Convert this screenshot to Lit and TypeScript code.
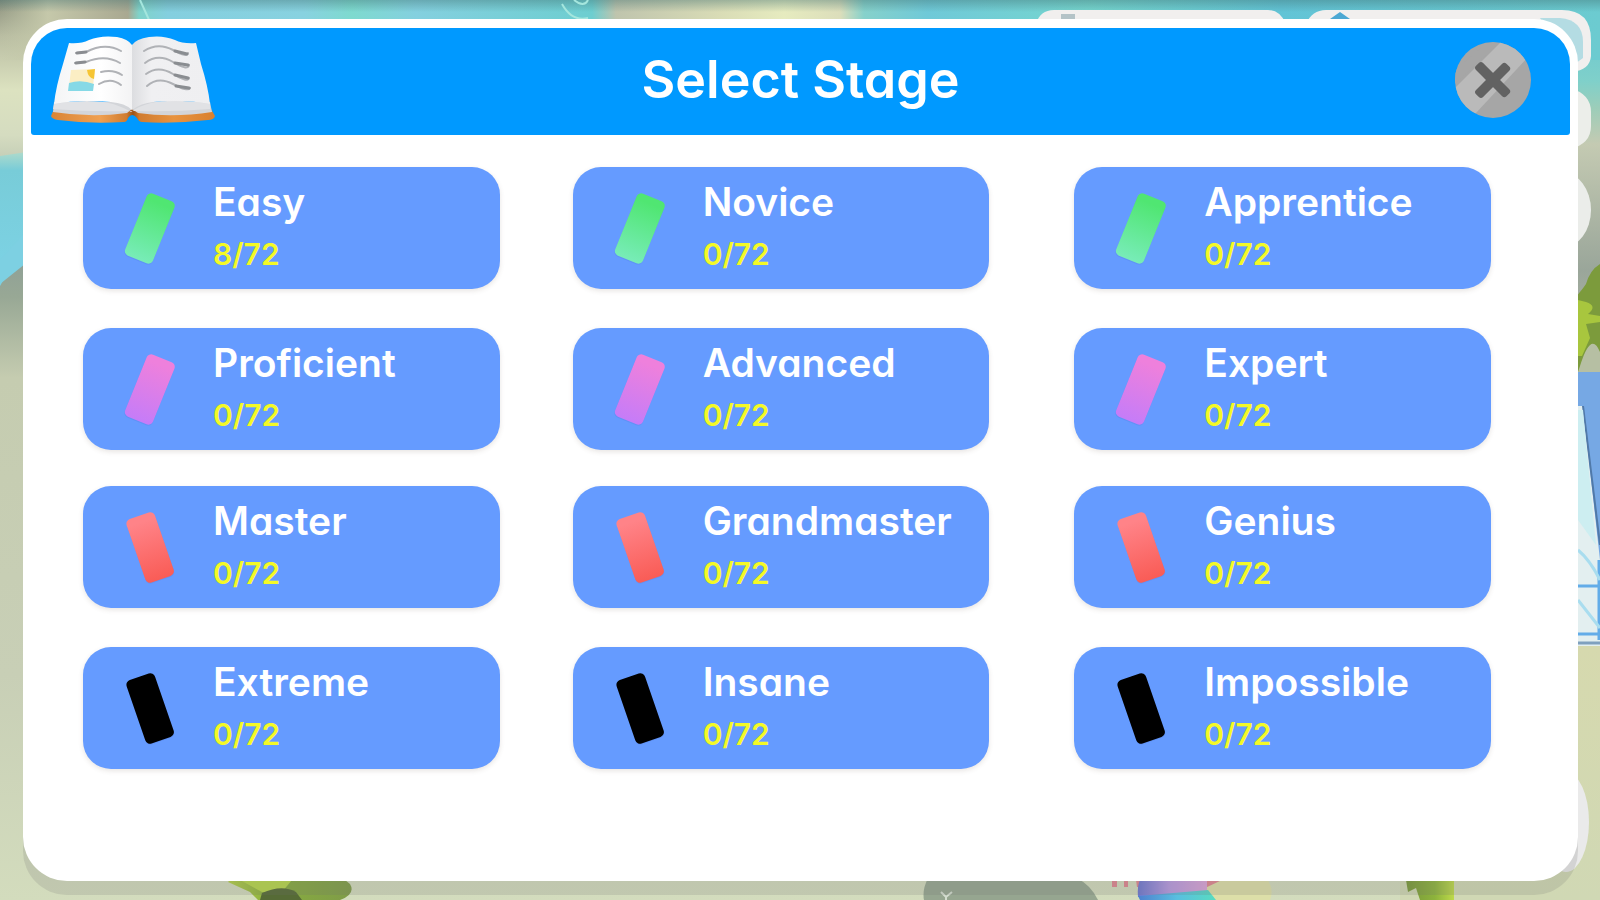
import { LitElement, html, css, svg } from "lit";
import { customElement, property } from "lit/decorators.js";

interface Stage {
  name: string;
  done: number;
  tone: "green" | "pink" | "red" | "black";
}

const TOTAL = 72;

const STAGES: Stage[] = [
  { name: "Easy", done: 8, tone: "green" },
  { name: "Novice", done: 0, tone: "green" },
  { name: "Apprentice", done: 0, tone: "green" },
  { name: "Proficient", done: 0, tone: "pink" },
  { name: "Advanced", done: 0, tone: "pink" },
  { name: "Expert", done: 0, tone: "pink" },
  { name: "Master", done: 0, tone: "red" },
  { name: "Grandmaster", done: 0, tone: "red" },
  { name: "Genius", done: 0, tone: "red" },
  { name: "Extreme", done: 0, tone: "black" },
  { name: "Insane", done: 0, tone: "black" },
  { name: "Impossible", done: 0, tone: "black" },
];

const TONES = {
  green: { from: "#50e672", to: "#78ecb8", angle: 22 },
  pink: { from: "#ee80dc", to: "#c57cf8", angle: 22 },
  red: { from: "#ff8388", to: "#f95c56", angle: -19 },
  black: { from: "#000", to: "#000", angle: -19 },
};

@customElement("stage-card")
export class StageCard extends LitElement {
  @property({ attribute: false }) stage!: Stage;

  static styles = css`
    :host {
      display: block;
      min-width: 0;
    }
    .card {
      box-sizing: border-box;
      display: flex;
      align-items: center;
      gap: 36px;
      width: 100%;
      height: 122px;
      margin: 0;
      padding: 0 12px 0 40px;
      border: 0;
      border-radius: 28px;
      background: #659bff;
      box-shadow: 0 2px 5px rgba(90, 70, 60, 0.14);
      color: #fff;
      font: inherit;
      text-align: left;
      cursor: pointer;
    }
    .tile {
      flex: none;
      width: 54px;
      height: 74px;
    }
    .text {
      display: flex;
      flex-direction: column;
      gap: 9px;
      padding-bottom: 3px;
    }
    .name {
      font-size: 39px;
      line-height: 46px;
      font-weight: 600;
    }
    .count {
      font-size: 30px;
      line-height: 40px;
      font-weight: 600;
      color: #f4f926;
    }
  `;

  render() {
    const { name, done, tone } = this.stage;
    const t = TONES[tone];
    return html`
      <button class="card" type="button">
        <svg class="tile" viewBox="0 0 54 74" aria-hidden="true">
          <defs>
            <linearGradient id="fill" x1="0" y1="0" x2="0" y2="1">
              <stop offset="0.1" stop-color=${t.from} />
              <stop offset="1" stop-color=${t.to} />
            </linearGradient>
          </defs>
          <g transform="rotate(${t.angle} 27 37)">
            <rect x="12" y="6" width="30" height="66" rx="5" fill="#3f5fc0" opacity="0.14" />
            <rect x="12" y="4" width="30" height="67" rx="5" fill="url(#fill)" />
          </g>
        </svg>
        <span class="text">
          <span class="name">${name}</span>
          <span class="count">${done}/${TOTAL}</span>
        </span>
      </button>
    `;
  }
}

const scenery = svg`
  <defs>
    <linearGradient id="ground" x1="0" y1="0" x2="0" y2="1">
      <stop offset="0" stop-color="#8d927f" />
      <stop offset="0.04" stop-color="#b9bda2" />
      <stop offset="0.1" stop-color="#dce2c0" />
      <stop offset="0.15" stop-color="#d5dcc0" />
      <stop offset="0.27" stop-color="#8b9d97" />
      <stop offset="0.33" stop-color="#98a895" />
      <stop offset="0.42" stop-color="#c5ccb0" />
      <stop offset="0.75" stop-color="#c8cfb6" />
      <stop offset="1" stop-color="#d3dcbd" />
    </linearGradient>
    <linearGradient id="water" x1="0" y1="0" x2="0" y2="1">
      <stop offset="0" stop-color="#b4dcca" />
      <stop offset="0.15" stop-color="#78ccd8" />
      <stop offset="1" stop-color="#7dd3e6" />
    </linearGradient>
    <linearGradient id="right" x1="0" y1="0" x2="0" y2="1">
      <stop offset="0" stop-color="#62c4d4" />
      <stop offset="0.09" stop-color="#7fd0ca" />
      <stop offset="0.12" stop-color="#9ccdb9" />
      <stop offset="0.16" stop-color="#c4cab2" />
      <stop offset="0.3" stop-color="#9aa69a" />
      <stop offset="0.42" stop-color="#b8bda8" />
      <stop offset="0.72" stop-color="#d6d9ae" />
      <stop offset="1" stop-color="#d0d8b4" />
    </linearGradient>
    <linearGradient id="top" gradientUnits="userSpaceOnUse" x1="0" y1="0" x2="1600" y2="0">
      <stop offset="0" stop-color="#c2c8a8" stop-opacity="0" />
      <stop offset="0.03" stop-color="#c5c8aa" />
      <stop offset="0.08" stop-color="#a9a891" />
      <stop offset="0.087" stop-color="#7fd3ca" />
      <stop offset="0.105" stop-color="#84cfdf" />
      <stop offset="0.19" stop-color="#88d2e0" />
      <stop offset="0.22" stop-color="#7edacf" />
      <stop offset="0.26" stop-color="#84d0df" />
      <stop offset="0.37" stop-color="#6dced0" />
      <stop offset="0.385" stop-color="#bfc4ad" />
      <stop offset="0.45" stop-color="#d9dcb6" />
      <stop offset="0.49" stop-color="#e6ebbf" />
      <stop offset="0.525" stop-color="#dcdebb" />
      <stop offset="0.54" stop-color="#86d1cb" />
      <stop offset="0.58" stop-color="#6fc9d8" />
      <stop offset="0.68" stop-color="#76d6cf" />
      <stop offset="0.8" stop-color="#62c4d6" />
      <stop offset="1" stop-color="#6ccbd0" />
    </linearGradient>
    <linearGradient id="shade" x1="0" y1="0" x2="0" y2="1">
      <stop offset="0" stop-color="#3f6f70" stop-opacity="0.4" />
      <stop offset="1" stop-color="#3f6f70" stop-opacity="0" />
    </linearGradient>
    <linearGradient id="leaf" x1="0" y1="0" x2="1" y2="0">
      <stop offset="0" stop-color="#78973a" />
      <stop offset="0.6" stop-color="#8db33c" />
      <stop offset="1" stop-color="#bdd94a" />
    </linearGradient>
    <linearGradient id="bush" x1="0" y1="0" x2="1" y2="0">
      <stop offset="0" stop-color="#b4d048" />
      <stop offset="0.35" stop-color="#88ad3e" />
      <stop offset="1" stop-color="#7f9c48" />
    </linearGradient>
    <linearGradient id="ball" x1="0" y1="0" x2="1" y2="0">
      <stop offset="0" stop-color="#6d78cf" />
      <stop offset="0.45" stop-color="#b79ae0" />
      <stop offset="1" stop-color="#dba4d6" />
    </linearGradient>
    <linearGradient id="ball-low" x1="0" y1="0" x2="1" y2="0">
      <stop offset="0" stop-color="#4f80cf" />
      <stop offset="0.5" stop-color="#59bfe0" />
      <stop offset="1" stop-color="#58dcc0" />
    </linearGradient>
  </defs>
  <rect width="1600" height="900" fill="url(#ground)" />
  <rect x="1400" width="200" height="900" fill="url(#right)" />
  <rect width="1600" height="60" fill="url(#top)" />
  <rect width="1600" height="12" fill="url(#shade)" />
  <path d="M0 156 L40 150 V216 L0 286Z" fill="url(#water)" />
  <path d="M0 284 L40 252 V216 L0 260Z" fill="#7dd0e2" />
  <path d="M562 4 Q572 22 588 18 M574 0 Q584 8 588 0 M140 0 L150 22" fill="none" stroke="#a4e6dd" stroke-width="2" />

  <path d="M1036 24 Q1040 10 1054 10 H1268 Q1280 10 1286 24 L1292 36 H1030Z" fill="#f1efee" />
  <path d="M1061 14 H1075 V22 H1061Z" fill="#b4c3c7" />
  <path d="M1306 24 Q1312 10 1326 10 H1562 Q1591 10 1591 40 V56 Q1590 70 1572 72 V60 L1500 22Z" fill="#f1efee" />
  <path d="M1540 18 H1560 Q1583 20 1583 42 V58 L1572 66Z" fill="#b4dce3" />
  <path d="M1330 19 L1340 12 L1350 19Z" fill="#4ca8d3" />
  <path d="M1570 88 Q1591 94 1591 112 V126 Q1591 144 1570 149Z" fill="#eceeea" />
  <ellipse cx="1562" cy="210" rx="29" ry="38" fill="#ebedea" />

  <path d="M1570 304 Q1582 290 1586 284 Q1590 270 1600 264 V372 H1570Z" fill="#7c9b3c" />
  <path d="M1570 298 L1586 302 Q1598 306 1588 314 L1600 316 V322 L1586 324 L1590 338 L1582 356 H1570Z" fill="#a8c63e" />
  <path d="M1580 366 Q1591 330 1600 352 V372 H1578Z" fill="#b6bfa3" />
  <path d="M1570 372 H1600 V646 H1570Z" fill="#e3eff0" />
  <path d="M1570 372 H1600 V560 L1583 406 H1570Z" fill="#76a8e4" />
  <path d="M1583 406 L1600 545" stroke="#5079a8" stroke-width="2" />
  <path d="M1578 410 L1583 410 L1596 545 L1578 520Z" fill="#cdeef1" />
  <path d="M1578 586 H1600 M1578 634 H1600 M1599 560 V640" stroke="#62ace8" stroke-width="3" />
  <path d="M1578 643 H1600" stroke="#7fa0be" stroke-width="3" />
  <path d="M1578 600 L1600 628 M1578 550 Q1590 560 1600 580" stroke="#a9ddef" stroke-width="3" fill="none" />
  <ellipse cx="1566" cy="822" rx="23" ry="50" fill="#eaeaea" />

  <path d="M228 882 L250 892 L258 900 H340 Q356 894 350 884 L345 880 H230Z" fill="url(#bush)" />
  <path d="M240 880 H292 L282 892 H262Z" fill="#b8d74b" />
  <path d="M262 893 Q282 884 296 892 L302 900 H260Z" fill="#566b36" />
  <path d="M928 878 Q922 890 924 900 H1098 Q1090 884 1076 878Z" fill="#96a690" />
  <path d="M941 892 L946 897 L952 892 M946 897 V900" fill="none" stroke="#d4ddcf" stroke-width="2" />
  <path d="M1112 880 H1117 V887 H1112Z M1124 880 H1128 V887 H1124Z M1136 880 H1222 L1212 887 H1137Z" fill="#de8790" />
  <path d="M1205 888 L1222 880 H1268 Q1274 890 1270 900 H1200Z" fill="#dddfa8" />
  <path d="M1140 880 H1207 V893 L1138 897Q1137 886 1140 880Z" fill="url(#ball)" />
  <path d="M1138 896 L1208 890 L1216 900 H1140Z" fill="url(#ball-low)" />
  <path d="M1406 880 H1454 V900 H1420 L1416 888 L1408 892Z" fill="url(#leaf)" />
`;

const book = svg`
  <defs>
    <linearGradient id="page-left" x1="0" y1="0" x2="1" y2="0">
      <stop offset="0" stop-color="#f4f5f6" />
      <stop offset="0.6" stop-color="#ffffff" />
      <stop offset="1" stop-color="#f3f3f4" />
    </linearGradient>
    <linearGradient id="page-right" x1="0" y1="0" x2="1" y2="0">
      <stop offset="0" stop-color="#dcdde0" />
      <stop offset="0.25" stop-color="#f0f0f2" />
      <stop offset="1" stop-color="#efeff1" />
    </linearGradient>
    <linearGradient id="cover" x1="0" y1="0" x2="1" y2="0">
      <stop offset="0" stop-color="#d98436" />
      <stop offset="0.3" stop-color="#f0a050" />
      <stop offset="0.46" stop-color="#d07c30" />
      <stop offset="0.5" stop-color="#9a5218" />
      <stop offset="0.54" stop-color="#d07c30" />
      <stop offset="0.75" stop-color="#e8933f" />
      <stop offset="1" stop-color="#d9802f" />
    </linearGradient>
  </defs>
  <path d="M0 80 L3 73 H160 L164 80 Q163 84 157 84 Q122 88 91 86 Q88 86 86 82 Q81 76 77 82 Q76 86 73 86 Q38 88 7 84 Q1 83 0 80Z" fill="url(#cover)" />
  <path d="M3 66 L2 76 Q40 82 76 77 L81 73 L87 77 Q122 82 161 76 L159 66Z" fill="#d3d5d9" />
  <path d="M3 68 Q40 62 62 68 Q74 72 80 76 Q88 70 100 67 Q122 62 159 68 V73 Q122 76 84 75 H78 Q40 76 2 73Z" fill="#e1e2e5" />
  <path d="M18 7 Q30 8 38 4 Q50 -1 66 1 Q77 3 81 9 V74 Q74 67 60 66 Q28 63 3 68 Q5 50 12 28Z" fill="url(#page-left)" />
  <path d="M145 7 Q132 8 124 4 Q112 -1 98 1 Q85 3 81 9 V74 Q90 67 102 66 Q134 63 159 68 Q157 50 150 28Z" fill="url(#page-right)" />
  <g fill="none" stroke-linecap="round">
    <g stroke="#b0b2b6" stroke-width="2">
      <path d="M25 17 L35 16 Q54 6 70 15" />
      <path d="M24 27 L35 26 Q54 18 69 27" />
      <path d="M50 36 Q62 33 71 39" />
      <path d="M48 48 Q60 41 70 49" />
      <path d="M93 15 Q107 6 122 14 T137 17" />
      <path d="M94 27 Q107 17 122 26 T138 29" />
      <path d="M95 38 Q107 29 122 38 T138 42" />
      <path d="M96 50 Q107 40 122 48 T139 52" />
    </g>
    <g stroke="#8a8d91" stroke-width="3">
      <path d="M26 17 L35 16 M25 27 L34 26" />
      <path d="M124 15 L136 18 M124 27 L137 29 M124 39 L137 42 M125 50 L138 52" />
    </g>
  </g>
  <path d="M20 34 L44 33 L42 50 L18 50Z" fill="#fbeec4" />
  <path d="M36 34 L44 33 L43 43 Q37 42 36 34Z" fill="#f6c534" />
  <path d="M18 47 Q30 43 43 48 L42 55 H17Z" fill="#86d9e6" />
`;

@customElement("app-root")
export class AppRoot extends LitElement {
  static styles = css`
    :host {
      display: block;
      font-family: Inter, "Liberation Sans", sans-serif;
      font-feature-settings: "cv11";
    }
    .page {
      position: relative;
      box-sizing: border-box;
      display: grid;
      min-height: 100vh;
      padding: 19px 22px 19px 23px;
      overflow: hidden;
    }
    .scenery {
      position: absolute;
      inset: 0;
      width: 100%;
      height: 100%;
    }
    .panel {
      position: relative;
      box-sizing: border-box;
      padding: 9px 8px 24px;
      border-radius: 44px;
      background: #fff;
      box-shadow: 0 14px 0 rgba(110, 110, 110, 0.18);
    }
    .header {
      display: grid;
      grid-template-columns: 1fr auto 1fr;
      align-items: center;
      box-sizing: border-box;
      height: 107px;
      padding: 0 39px 4px 20px;
      border-radius: 36px 36px 3px 3px;
      background: #0099ff;
      color: #fff;
    }
    .book {
      width: 164px;
      height: 88px;
    }
    h1 {
      margin: 0;
      padding-left: 19px;
      font-size: 52px;
      line-height: 64px;
      font-weight: 600;
    }
    .close {
      justify-self: end;
      width: 76px;
      height: 76px;
      padding: 0;
      border: 0;
      border-radius: 50%;
      background: none;
      cursor: pointer;
    }
    .close svg {
      display: block;
      width: 100%;
      height: 100%;
    }
    .stages {
      display: grid;
      grid-template-columns: 417fr 73fr 417fr 85fr 417fr;
      grid-template-rows: 161px 158px 161px 122px;
      align-items: start;
      padding: 32px 79px 0 52px;
    }
    .stages stage-card:nth-child(3n + 1) {
      grid-column: 1;
    }
    .stages stage-card:nth-child(3n + 2) {
      grid-column: 3;
    }
    .stages stage-card:nth-child(3n) {
      grid-column: 5;
    }
  `;

  render() {
    return html`
      <div class="page">
        <svg class="scenery" viewBox="0 0 1600 900" preserveAspectRatio="xMidYMid slice" aria-hidden="true">
          ${scenery}
        </svg>
        <main class="panel">
          <header class="header">
            <svg class="book" viewBox="0 0 164 88" aria-hidden="true">${book}</svg>
            <h1>Select Stage</h1>
            <button class="close" type="button" aria-label="Close">
              <svg viewBox="0 0 76 76" aria-hidden="true">
                <defs>
                  <clipPath id="disc"><circle cx="38" cy="38" r="38" /></clipPath>
                </defs>
                <g clip-path="url(#disc)">
                  <rect width="76" height="76" fill="#a6a6a6" />
                  <path d="M0 46 L46 0 H60 L74 14 L20 72 L0 62Z" fill="#bababa" />
                  <path d="M0 42 L32 12 L26 6 L0 28Z" fill="#a6a6a6" />
                </g>
                <g fill="#626262">
                  <rect x="16" y="33" width="43" height="10" rx="3" transform="rotate(45 38 38)" />
                  <rect x="16" y="33" width="43" height="10" rx="3" transform="rotate(-45 38 38)" />
                </g>
              </svg>
            </button>
          </header>
          <section class="stages" aria-label="Stages">
            ${STAGES.map((stage) => html`<stage-card .stage=${stage}></stage-card>`)}
          </section>
        </main>
      </div>
    `;
  }
}
